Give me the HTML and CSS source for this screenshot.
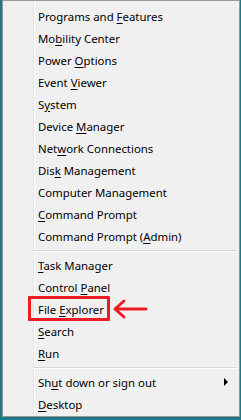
FILE: index.html
```html
<!DOCTYPE html>
<html lang="en">
<head>
    <meta charset="UTF-8">
    <title>Quick Link Menu</title>
    <link rel="stylesheet" href="styles.css">
</head>
<body>
    <div class="menu">
        <div class="item"><span>Programs and <u>F</u>eatures</span></div>
        <div class="item"><span>Mo<u>b</u>ility Center</span></div>
        <div class="item"><span>Power <u>O</u>ptions</span></div>
        <div class="item"><span>Event <u>V</u>iewer</span></div>
        <div class="item"><span>S<u>y</u>stem</span></div>
        <div class="item"><span>Device <u>M</u>anager</span></div>
        <div class="item"><span>Net<u>w</u>ork Connections</span></div>
        <div class="item"><span>Dis<u>k</u> Management</span></div>
        <div class="item"><span>Computer Mana<u>g</u>ement</span></div>
        <div class="item"><span><u>C</u>ommand Prompt</span></div>
        <div class="item"><span>Command Prompt (<u>A</u>dmin)</span></div>
        <div class="sep"></div>
        <div class="item"><span><u>T</u>ask Manager</span></div>
        <div class="item"><span>Control <u>P</u>anel</span></div>
        <div class="item marked">
            <span>File <u>E</u>xplorer</span>
            <span class="mark-box"></span>
            <svg class="mark-arrow" width="40" height="24" viewBox="0 0 40 24">
                <path d="M12 3 L3 11 L12 19 M4 11 L34 11" fill="none" stroke="#ec1c24" stroke-width="3" stroke-linecap="round" stroke-linejoin="round"/>
            </svg>
        </div>
        <div class="item"><span><u>S</u>earch</span></div>
        <div class="item"><span><u>R</u>un</span></div>
        <div class="sep"></div>
        <div class="item sub"><span>Sh<u>u</u>t down or sign out</span></div>
        <div class="item"><span><u>D</u>esktop</span></div>
    </div>
</body>
</html>
```

FILE: styles.css
```css
body {
    margin: 0;
    background: #1c7a86;
    font-family: "Noto Sans", Arial, sans-serif;
    font-size: 11.4px;
    color: #000;
}
.menu {
    margin-left: 2px;
    width: 236px;
    height: 411px;
    padding: 4px 0 0 0;
    border: 1px solid #979797;
    background: linear-gradient(to right, #f0f0f0 30px, #e2e2e2 30px, #e2e2e2 31px, #fff 31px, #fff 32px, #f0f0f0 32px);
}
.item {
    position: relative;
    display: flex;
    align-items: center;
    height: 22px;
    padding-left: 35px;
}
.item u {
    text-underline-offset: 2px;
}
.sep {
    height: 1px;
    margin: 3px 2px 2px 30px;
    background: #d7d7d7;
    border-bottom: 1px solid #fff;
}
.sub::after {
    content: "";
    position: absolute;
    right: 11px;
    top: 7px;
    border-left: 4px solid #000;
    border-top: 4px solid transparent;
    border-bottom: 4px solid transparent;
}
.mark-box {
    position: absolute;
    left: 25px;
    top: -2px;
    width: 76px;
    height: 19px;
    border: 3px solid #ec1c24;
    border-radius: 1px;
}
.mark-arrow {
    position: absolute;
    left: 109px;
    top: 0;
}
```
